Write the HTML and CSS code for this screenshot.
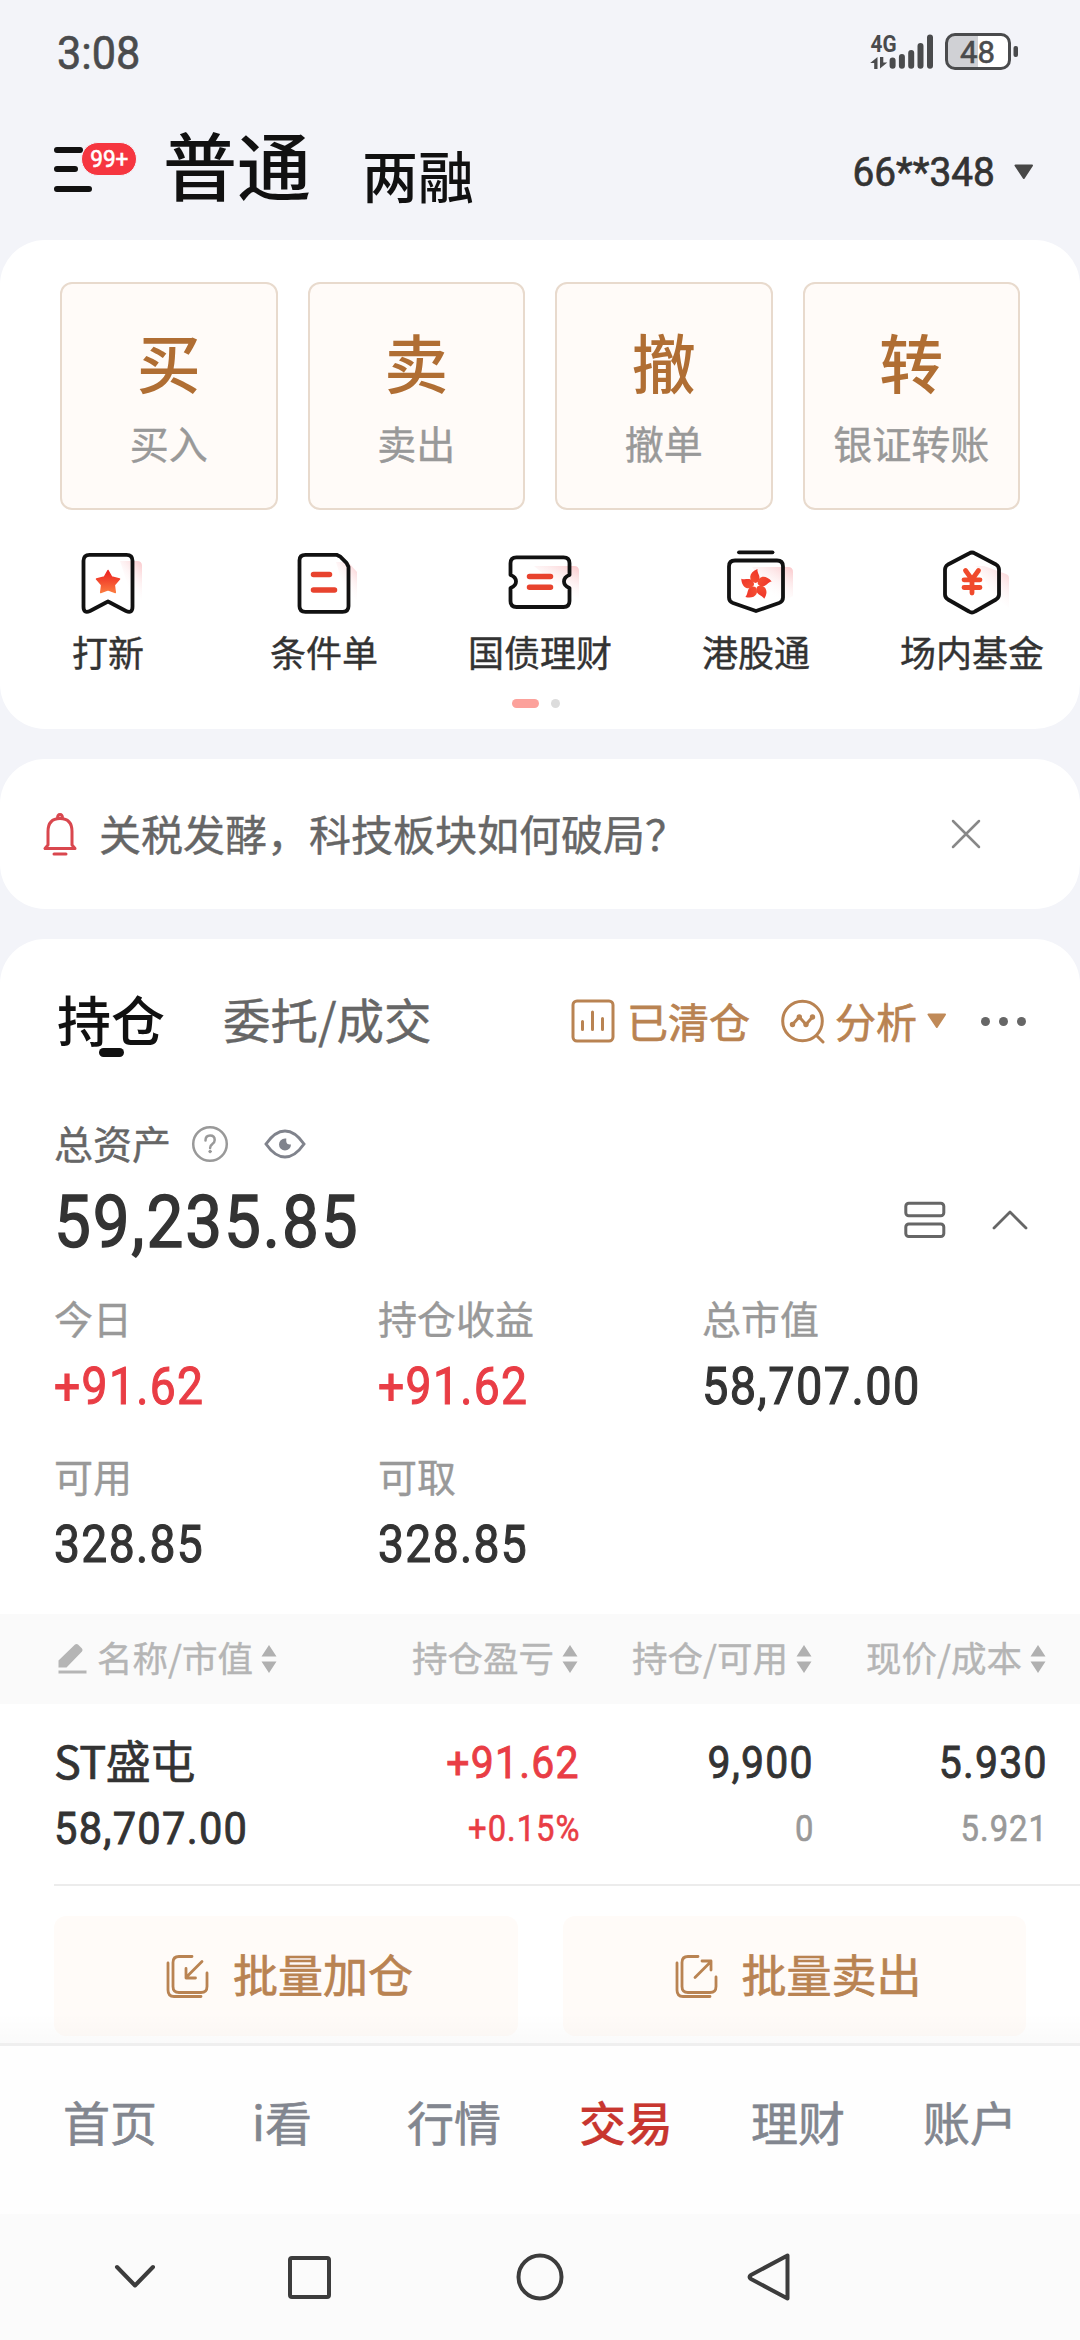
FILE: index.html
```html
<!DOCTYPE html>
<html lang="zh-CN">
<head>
<meta charset="utf-8">
<title>交易</title>
<link rel="stylesheet" href="styles.css">
</head>
<body>
<div class="page">
  <div class="status">
    <span class="num time">3:08</span>
    <div class="status-right">
      <svg class="signal" viewBox="870 30 64 42">
        <text class="net" x="870.5" y="51" textLength="26" lengthAdjust="spacingAndGlyphs">4G</text>
        <path class="solid" d="M877.5 56v12h-3.300v-6h-4zM880 67.500v-11.500h3.300v5.500h4z"/>
        <path class="bars" d="M892.600 59.500v5.200M901.900 56v8.700M911.200 52v12.700M920.500 45v19.700M930 36.500v28.200"/>
      </svg>
      <svg class="battery" viewBox="944 30 76 42">
        <rect x="946.500" y="33.500" width="63" height="34" rx="8.500" fill="#fff"/>
        <path d="M978 33.500v34h-23a8.500 8.500 0 0 1-8.500-8.500v-17a8.500 8.500 0 0 1 8.500-8.500z" fill="#d0d1d5"/>
        <rect x="946.500" y="33.500" width="63" height="34" rx="8.500" fill="none" stroke="#4a4b4d" stroke-width="3"/>
        <rect x="1013.500" y="45" width="4.500" height="11" rx="2" fill="#4a4b4d"/>
        <text class="level" x="960" y="62" textLength="35" lengthAdjust="spacingAndGlyphs">48</text>
      </svg>
    </div>
  </div>

  <header class="header">
    <div class="menu">
      <svg class="menu-icon" viewBox="0 0 40 48"><path d="M3 5h23M3 24h18M3 44h32"/></svg>
      <span class="badge num"><span class="badge-text">99+</span></span>
    </div>
    <h1 class="mode">普通</h1>
    <span class="mode-alt">两融</span>
    <div class="account">
      <span class="num account-no">66**348</span>
      <svg class="caret" viewBox="0 0 20 16"><path d="M1.500 1.500h16.500l-8.200 12.500z"/></svg>
    </div>
  </header>

  <main class="content">
    <section class="card trade">
      <div class="actions">
        <div class="action"><b>买</b><span>买入</span></div>
        <div class="action"><b>卖</b><span>卖出</span></div>
        <div class="action"><b>撤</b><span>撤单</span></div>
        <div class="action"><b>转</b><span>银证转账</span></div>
      </div>
      <svg class="defs" width="0" height="0">
        <defs>
          <linearGradient id="fire" x1="0" y1="0" x2="0" y2="1"><stop offset="0" stop-color="#ec1f1f"/><stop offset="1" stop-color="#fb7a40"/></linearGradient>
          <linearGradient id="fire2" gradientUnits="userSpaceOnUse" x1="12" y1="-14" x2="-12" y2="14"><stop offset="0" stop-color="#ee2a25"/><stop offset="1" stop-color="#fa7440"/></linearGradient>
          <linearGradient id="glow" x1="1" y1="0" x2="0.400" y2="0.900"><stop offset="0" stop-color="#fac6c9"/><stop offset="0.900" stop-color="#fff" stop-opacity="0"/></linearGradient>
        </defs>
      </svg>
      <div class="tools">
        <div class="tool">
          <svg viewBox="-40 0 80 72">
            <path d="M12 15h17q5 0 5 5v34l-12-8z" fill="url(#glow)"/>
            <path class="ink" d="M-18.500 8.800h37q6 0 6 6v46q0 7-6.500 4.200l-18-9.500-18 9.500q-6.500 2.800-6.500-4.200v-46q0-6 6-6z"/>
            <path d="M0 24.500l3.700 6.500 7.800 2-5.200 5.900 1 7.600-7.300-2.600-7.300 2.600 1-7.600-5.200-5.900 7.800-2z" fill="url(#fire)" stroke="url(#fire)" stroke-width="1.500" stroke-linejoin="round"/>
          </svg>
          <span>打新</span>
        </div>
        <div class="tool">
          <svg viewBox="-40 0 80 72">
            <path d="M12 16h12l9 10v28l-12-8z" fill="url(#glow)"/>
            <path class="ink" d="M-18.500 8.800h31l4 2 6 6 2 4v39.500q0 5.500-6 5.500h-37q-6 0-6-5.500v-46q0-5.500 6-5.500z"/>
            <path class="bar" d="M-10.500 28.500h16M-10.500 44h21"/>
          </svg>
          <span>条件单</span>
        </div>
        <div class="tool">
          <svg viewBox="-40 0 80 72">
            <path d="M-6 20h40q5 0 5 5v28l-16-8z" fill="url(#glow)"/>
            <path class="ink" d="M-23.500 11.300h47q6 0 6 6v11.700q-5.500 2-5.500 6.500t5.500 6.500v13q0 6-6 6h-47q-6 0-6-6v-13q5.500-2 5.500-6.500t-5.500-6.500v-11.700q0-6 6-6z"/>
            <path class="bar" d="M-10.500 30.500h21M-10.500 41.300h21"/>
          </svg>
          <span>国债理财</span>
        </div>
        <div class="tool">
          <svg viewBox="-40 0 80 72">
            <path d="M-4 21h36q5 0 5 5v24l-14 8z" fill="url(#glow)"/>
            <path class="ink" d="M-17 6.300h33.500"/>
            <path class="ink" d="M-21 14.500h42q6 0 6 6v31q0 4-4 5.500l-23 8-23-8q-4-1.500-4-5.500v-31q0-6 6-6z"/>
            <g transform="translate(0 39)" fill="url(#fire2)">
              <path id="petal" d="M-.8-2C-8-4.500-7.500-12.500 1.500-16C.8-12 5-9 3-4.800C2.200-3 .7-2-.8-2z"/>
              <use href="#petal" transform="rotate(72)"/><use href="#petal" transform="rotate(144)"/>
              <use href="#petal" transform="rotate(216)"/><use href="#petal" transform="rotate(288)"/>
            </g>
          </svg>
          <span>港股通</span>
        </div>
        <div class="tool">
          <svg viewBox="-40 0 80 72">
            <path d="M4 20h8l22 8q3 1 3 4v30l-14-10z" fill="url(#glow)"/>
            <path class="ink" d="M-3 7.500q3-2 6 0l21 11q3 2 3 5v25q0 3-3 5l-21 12q-3 2-6 0l-21-12q-3-2-3-5v-25q0-3 3-5z"/>
            <path d="M-6.500 24.500l6.500 9 6.500-9M-8 33.800h16M-8 41.500h16M0 34v13" fill="none" stroke="#f04a2c" stroke-width="4.800" stroke-linecap="round"/>
          </svg>
          <span>场内基金</span>
        </div>
      </div>
      <div class="pager"><i class="on"></i><i></i></div>
    </section>

    <section class="card notice">
      <svg class="bell" viewBox="0 0 36 44"><path d="M15.500 6.500q0-4 2.500-4t2.500 4M6 33V19.500q0-13 12-13t12 13V33M6 33l-3 3.500h30L30 33M12 42h12"/></svg>
      <span class="notice-text">关税发酵，科技板块如何破局？</span>
      <svg class="close" viewBox="0 0 30 30"><path d="M2 2l26 26M28 2L2 28"/></svg>
    </section>

    <section class="card hold">
      <div class="tabs">
        <span class="tab on">持仓</span>
        <span class="tab">委托/成交</span>
        <svg class="gold-icon cleared" viewBox="0 0 44 44"><rect x="2" y="2" width="40" height="40" rx="4"/><path d="M11.500 22.500v8M21.500 13v17.500M31.500 19.500v11"/></svg>
        <span class="gold">已清仓</span>
        <svg class="gold-icon analyse" viewBox="0 0 44 44"><circle cx="21.500" cy="22" r="19.800"/><path d="M36 37l6 6M11.500 25.500l6.800-7.500 6.700 7.500 6.500-7.500"/><g class="dots"><circle cx="11.500" cy="25.500" r="2.700"/><circle cx="18.300" cy="18" r="2.700"/><circle cx="25" cy="25.500" r="2.700"/><circle cx="31.500" cy="18" r="2.700"/></g></svg>
        <span class="gold">分析</span>
        <svg class="caret gold-caret" viewBox="0 0 20 16"><path d="M1.500 1.500h16.500l-8.200 12.500z"/></svg>
        <span class="more"><i></i><i></i><i></i></span>
      </div>

      <div class="asset-title">
        <span>总资产</span>
        <svg class="help" viewBox="0 0 38 38"><circle cx="19" cy="19" r="16.800"/><path d="M14.500 15.500q0-5 4.600-5t4.600 4.400q0 2.400-2.400 4.200-2.200 1.500-2.200 3.900"/><circle cx="19.100" cy="26.500" r="1.300" class="dot"/></svg>
        <svg class="eye" viewBox="0 0 42 32"><path d="M2 16Q11 3 21 3t19 13Q31 29 21 29T2 16z"/><path class="pupil" d="M21 10.500a6 6 0 1 0 6 6q-4 .5-4.500-2-.4-2-.2-4z"/></svg>
      </div>
      <div class="total">
        <span class="num total-no">59,235.85</span>
        <svg class="list" viewBox="0 0 42 38"><rect x="1.800" y="2.300" width="38" height="12.500" rx="3"/><rect x="1.800" y="23" width="38" height="12.500" rx="3"/></svg>
        <svg class="up" viewBox="0 0 36 20"><path d="M2 18L18 2l16 16"/></svg>
      </div>

      <div class="stats">
        <div class="stat"><span>今日</span><b class="num short red">+91.62</b></div>
        <div class="stat"><span>持仓收益</span><b class="num short red">+91.62</b></div>
        <div class="stat"><span>总市值</span><b class="num">58,707.00</b></div>
        <div class="stat"><span>可用</span><b class="num short">328.85</b></div>
        <div class="stat"><span>可取</span><b class="num short">328.85</b></div>
      </div>

      <div class="grid thead">
        <div class="th first">
          <svg class="pencil" viewBox="0 0 30 34"><path d="M1.500 25.500v-7L18 2.500q1.500-1.200 3 0l4 4q1.200 1.500 0 3L9.500 25.500zM1.500 28.500h28v3h-28z"/></svg>
          <span>名称/市值</span>
          <svg class="sort" viewBox="0 0 16 30"><path d="M8 1l7.500 11.500H.5zM.5 17.500h15L8 29z"/></svg>
        </div>
        <div class="th"><span>持仓盈亏</span><svg class="sort" viewBox="0 0 16 30"><path d="M8 1l7.500 11.500H.5zM.5 17.500h15L8 29z"/></svg></div>
        <div class="th"><span>持仓/可用</span><svg class="sort" viewBox="0 0 16 30"><path d="M8 1l7.500 11.500H.5zM.5 17.500h15L8 29z"/></svg></div>
        <div class="th"><span>现价/成本</span><svg class="sort" viewBox="0 0 16 30"><path d="M8 1l7.500 11.500H.5zM.5 17.500h15L8 29z"/></svg></div>
      </div>
      <div class="grid row">
        <div class="td first"><span class="name">ST盛屯</span><span class="num big">58,707.00</span></div>
        <div class="td red"><span class="num big">+91.62</span><span class="num small">+0.15%</span></div>
        <div class="td"><span class="num big">9,900</span><span class="num small dim">0</span></div>
        <div class="td"><span class="num big">5.930</span><span class="num small dim">5.921</span></div>
      </div>

      <div class="batch">
        <div class="batch-btn">
          <svg viewBox="0 0 44 44"><path d="M26 2.500H13q-6 0-6 6v24q0 6 6 6h22q6 0 6-6V19M2 9v27q0 6.500 6 6.500h27M36 7.500L20 23.500M20 14.500v9.500h9.500"/></svg>
          <span>批量加仓</span>
        </div>
        <div class="batch-btn">
          <svg viewBox="0 0 44 44"><path d="M23 2.500H13q-6 0-6 6v24q0 6 6 6h22q6 0 6-6V23M2 9v27q0 6.500 6 6.500h27M20 23.500L36 7.500M27 7h9v9"/></svg>
          <span>批量卖出</span>
        </div>
      </div>
    </section>
  </main>

  <nav class="nav">
    <span>首页</span><span>i看</span><span>行情</span><span class="on">交易</span><span>理财</span><span>账户</span>
  </nav>
  <div class="sys">
    <svg viewBox="0 0 1080 126">
      <path d="M117 53l18 18.500L153 53"/>
      <rect x="290" y="44" width="39" height="39" rx="2"/>
      <circle cx="540" cy="63" r="21.500"/>
      <path d="M787.500 41.500v43L751 65q-3-2 0-4z"/>
    </svg>
  </div>
</div>
</body>
</html>
```
FILE: styles.css
```css
* { box-sizing: border-box; margin: 0; padding: 0; }
body { font-family: "Noto Sans CJK SC", sans-serif; color: #333; background: #f3f4f9; -webkit-text-stroke: .4px; }
svg { display: block; flex: none; overflow: visible; }
i { font-style: normal; }
.page { width: 1080px; height: 2340px; display: flex; flex-direction: column; overflow: hidden; white-space: nowrap; }
.num { font-family: Roboto, sans-serif; font-weight: 400; letter-spacing: .03em; display: inline-block; transform-origin: left center; -webkit-text-stroke: .9px; }

/* status bar */
.status { height: 104px; padding: 0 60px 0 57px; display: flex; align-items: center; justify-content: space-between; color: #4a4b4d; }
.time { font-size: 46px; transform: scaleX(.94); -webkit-text-stroke: .6px; padding-top: 1px; letter-spacing: 0; }
.status-right { display: flex; gap: 10px; }
.signal { width: 64px; height: 42px; }
.battery { width: 76px; height: 42px; }
.net { font: 700 23px Roboto, sans-serif; fill: #4a4b4d; -webkit-text-stroke: 0; }
.level { font: 400 32px Roboto, sans-serif; fill: #4a4b4d; stroke: #4a4b4d; stroke-width: .6px; }
.solid { fill: #4a4b4d; }
.bars { fill: none; stroke: #4a4b4d; stroke-width: 6; stroke-linecap: round; }

/* header */
.header { height: 136px; padding: 0 46px 0 54px; display: flex; color: #111; -webkit-text-stroke: 0; }
.menu { width: 109px; padding-top: 41px; position: relative; }
.menu-icon { width: 40px; height: 48px; fill: none; stroke: #111; stroke-width: 6; stroke-linecap: round; }
.badge { position: absolute; left: 27px; top: 38px; width: 56px; height: 34px; border: 1.500px solid #f3f4f9; border-radius: 17px; background: #f63640; color: #fff; font-size: 24px; line-height: 32px; text-align: center; letter-spacing: 0; -webkit-text-stroke: .6px; }
.badge-text { display: inline-block; transform: scaleX(.94); }
.mode { font-size: 74px; font-weight: 500; line-height: 117px; width: 199px; }
.mode-alt { font-size: 56px; font-weight: 500; line-height: 140px; }
.account { margin-left: auto; display: flex; align-items: center; gap: 19px; height: 136px; color: #333; }
.account-no { font-size: 40px; line-height: 60px; margin-top: 2px; letter-spacing: 0; transform: scaleX(.97); transform-origin: right center; -webkit-text-stroke: .7px; }
.caret { width: 20px; height: 16px; fill: #474747; stroke: #474747; stroke-width: 2; stroke-linejoin: round; }

/* cards */
.content { flex: 1; min-height: 0; display: flex; flex-direction: column; gap: 30px; overflow: hidden; position: relative; }
.content::after { content: ""; position: absolute; left: 0; right: 0; bottom: 0; height: 30px; background: linear-gradient(rgba(0,0,0,0), rgba(0,0,0,.02)); }
.card { background: #fff; border-radius: 45px; flex: none; }
.trade { height: 489px; padding-top: 42px; }
.actions { display: grid; grid-template-columns: repeat(4, 1fr); gap: 30px; padding: 0 60px; }
.action { height: 228px; border: 2px solid #e8dacd; border-radius: 12px; background: #fffbf8; display: flex; flex-direction: column; align-items: center; padding-top: 36px; }
.action b { font-size: 64px; font-weight: 500; line-height: 80px; color: #b06e33; -webkit-text-stroke: 0; }
.action span { font-size: 39px; line-height: 50px; margin-top: 17px; color: #999; }
.defs { position: absolute; }
.tools { display: grid; grid-template-columns: repeat(5, 216px); margin-top: 36px; }
.tool { display: flex; flex-direction: column; align-items: center; font-size: 36px; line-height: 50px; color: #333; }
.tool svg { width: 80px; height: 72px; margin-bottom: 8px; }
.ink { fill: none; stroke: #111; stroke-width: 3.800; stroke-linejoin: round; stroke-linecap: round; }
.bar { fill: none; stroke: #e8432e; stroke-width: 5.500; stroke-linecap: round; }
.pager { display: flex; justify-content: center; gap: 12px; margin-top: 23px; padding-right: 8px; }
.pager i { width: 9px; height: 9px; border-radius: 5px; background: #dcdcdc; }
.pager .on { width: 27px; background: #fca19b; }

/* notice */
.notice { height: 150px; padding: 0 99px 0 42px; display: flex; align-items: center; }
.bell { width: 36px; height: 44px; fill: none; stroke: #d9474e; stroke-width: 3; stroke-linecap: round; stroke-linejoin: round; }
.notice-text { font-size: 42px; line-height: 60px; margin: -2px 0 0 21px; color: #666; }
.close { width: 30px; height: 30px; margin-left: auto; fill: none; stroke: #888; stroke-width: 2.500; stroke-linecap: round; }

/* holdings */
.hold { height: 1150px; padding-top: 42px; }
.tabs { height: 80px; padding: 0 54px 0 57px; display: flex; align-items: center; }
.tab { font-size: 47.500px; line-height: 76px; color: #666; margin-top: -4px; }
.tab.on { font-size: 54px; font-weight: 500; color: #111; margin-right: 58px; position: relative; -webkit-text-stroke: 0; }
.tab.on::after { content: ""; position: absolute; left: 42px; bottom: 0; width: 25px; height: 9px; border-radius: 4.500px; background: #111; }
.gold { font-size: 41px; line-height: 60px; color: #b98352; -webkit-text-stroke: .7px; margin-bottom: 2px; }
.gold-icon { width: 44px; height: 44px; fill: none; stroke: #b98352; stroke-width: 3; stroke-linecap: round; }
.gold-icon .dots { fill: #b98352; stroke: none; }
.cleared { margin-left: auto; margin-right: 12px; }
.analyse { margin: 0 10px 0 31px; }
.gold-caret { fill: #c08a58; stroke: #c08a58; margin-left: 10px; }
.more { display: flex; gap: 9px; margin-left: 34px; }
.more i { width: 9px; height: 9px; border-radius: 50%; background: #666; }
.asset-title { display: flex; align-items: center; height: 50px; margin-top: 56px; padding-left: 54px; font-size: 39px; line-height: 50px; color: #666; }
.help { width: 38px; height: 38px; margin: 3px 0 0 20px; fill: none; stroke: #999; stroke-width: 2.500; stroke-linecap: round; }
.help .dot { fill: #999; stroke-width: 1; }
.eye { width: 42px; height: 32px; margin: 4px 0 0 35px; fill: none; stroke: #80838c; stroke-width: 3; }
.eye .pupil { fill: #80838c; stroke: none; }
.total { display: flex; align-items: center; height: 80px; margin-top: 15px; padding: 0 52px 0 54px; }
.total-no { font-size: 72px; line-height: 80px; margin-top: 2px; transform: scaleX(.91); -webkit-text-stroke: 1.500px; }
.list { width: 42px; height: 38px; margin-left: auto; margin-top: -4px; fill: none; stroke: #666; stroke-width: 3; }
.up { width: 36px; height: 20px; margin-left: 46px; margin-top: -4px; fill: none; stroke: #666; stroke-width: 2.800; stroke-linecap: round; stroke-linejoin: round; }
.stats { display: grid; grid-template-columns: repeat(3, 324px); row-gap: 35px; margin-top: 30px; padding-left: 54px; }
.stat { display: flex; flex-direction: column; gap: 15px; height: 123px; }
.stat span { font-size: 39px; line-height: 50px; color: #999; }
.stat b { font-size: 51px; line-height: 60px; transform: scaleX(.92); -webkit-text-stroke: 1.100px; }
.stat b.short { transform: scaleX(.905); }
.red, .stat b.red { color: #e93d45; }

/* table */
.grid { display: grid; grid-template-columns: 344px 234px 234px 234px; padding-right: 34px; }
.thead { height: 90px; margin-top: 41px; background: #fafafa; align-items: center; font-size: 35.500px; line-height: 50px; color: #b5b5b5; }
.th { display: flex; align-items: center; justify-content: flex-end; gap: 8px; }
.th span { margin-top: -4px; }
.td.first { align-items: flex-start; padding-left: 54px; }
.th.first { justify-content: flex-start; padding-left: 54px; }
.pencil { width: 30px; height: 34px; margin-left: 3px; fill: #b5b5b5; }
.th.first span { margin-left: 2px; }
.sort { width: 16px; height: 30px; fill: #b0b0b0; }
.row { height: 182px; padding-top: 31px; position: relative; }
.row::after { content: ""; position: absolute; left: 54px; right: 0; bottom: 0; height: 2px; background: #ececec; }
.td { display: flex; flex-direction: column; align-items: flex-end; gap: 10px; line-height: 56px; }
.td .num { transform-origin: right center; transform: scaleX(.91); margin-right: -2px; }
.td.first .num { transform-origin: left center; transform: scaleX(.925); }
.name { font-size: 45px; line-height: 50px; padding-bottom: 6px; letter-spacing: -.5px; -webkit-text-stroke: .7px; }
.big { font-size: 45px; }
.td .small { font-size: 36px; -webkit-text-stroke: .6px; }
.dim { color: #999; }

/* batch buttons */
.batch { display: grid; grid-template-columns: 1fr 1fr; gap: 45px; margin-top: 30px; padding: 0 54px 0 54px; }
.batch-btn { height: 120px; border-radius: 12px; background: #fffbf8; display: flex; align-items: center; padding-left: 112px; gap: 23px; color: #b98352; font-size: 45px; line-height: 60px; }
.batch-btn span { margin-bottom: 4px; -webkit-text-stroke: .7px; }
.batch-btn svg { width: 44px; height: 44px; fill: none; stroke: #b98352; stroke-width: 2.800; stroke-linecap: round; stroke-linejoin: round; }

/* bottom navigation */
.nav { height: 171px; border-top: 3px solid #efefef; background: #fefefe; display: grid; grid-template-columns: repeat(6, 172px); padding: 43px 24px 0; text-align: center; font-size: 47px; line-height: 64px; color: #82868f; -webkit-text-stroke: .6px; }
.nav .on { color: #c8362f; font-weight: 500; -webkit-text-stroke: .2px; }
.sys { height: 126px; background: #fbfbfb; }
.sys svg { width: 1080px; height: 126px; fill: none; stroke: #3c3c3c; stroke-width: 4; stroke-linejoin: round; stroke-linecap: round; }
```
